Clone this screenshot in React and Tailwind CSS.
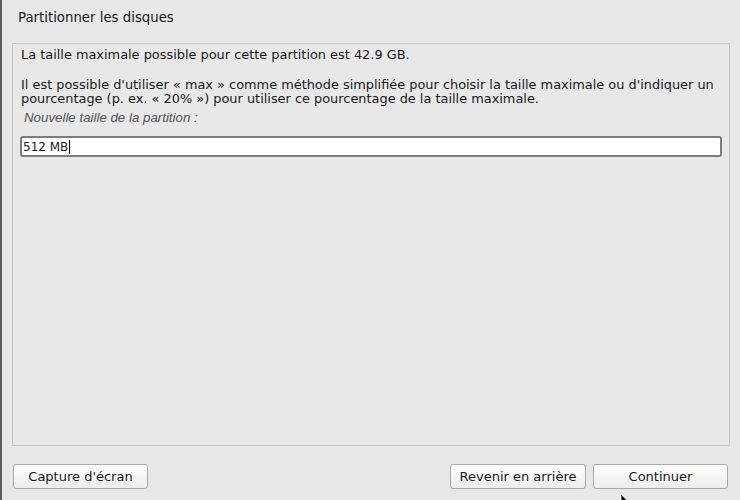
export default function App() {
  const font = { fontFamily: '"DejaVu Sans", sans-serif' };

  return (
    <div
      className="relative flex w-[740px] h-[500px] overflow-hidden bg-[#e8e8e8] border-l-2 border-[#5e5e5e] text-[13px] text-[#1a1a1a]"
      style={font}
    >
      <div className="flex flex-1 flex-col ml-[10px] mr-[10px]">
        {/* Header */}
        <div className="h-[43px] pl-[6px] pt-[11px] leading-[14px] text-[13.3px]">Partitionner les disques</div>

        {/* Main panel */}
        <div className="flex h-[403px] flex-col border border-[#c6c6c6] px-[7px] pt-[4px] text-[12.9px]">
          <p className="pl-px leading-[14px]">La taille maximale possible pour cette partition est 42.9 GB.</p>
          <p className="mt-[16px] pl-px leading-[14px]">
            Il est possible d'utiliser « max » comme méthode simplifiée pour choisir la taille maximale ou d'indiquer un
            pourcentage (p. ex. « 20% ») pour utiliser ce pourcentage de la taille maximale.
          </p>
          <p
            className="mt-[5px] pl-[4px] leading-[14px] italic text-[13.3px] text-[#555]"
            style={{ fontFamily: '"Liberation Sans", sans-serif' }}
          >
            Nouvelle taille de la partition :
          </p>
          <div className="mt-[11px] flex h-[21px] items-center rounded-[3px] border-2 border-[#7c7c7c] bg-white pl-[1px] text-[12px]">
            <span className="leading-[14px]">512 MB</span>
            <span className="ml-px h-[14px] w-px bg-black" />
          </div>
        </div>

        {/* Buttons */}
        <div className="mt-[18px] flex items-center justify-between pl-px pr-[2px]">
          <button className="h-[25px] w-[135px] rounded-[3px] border border-[#a9a9a9] bg-gradient-to-b from-white to-[#ededed] leading-[14px] text-[#1a1a1a]">
            Capture d'écran
          </button>
          <div className="flex gap-[7px]">
            <button className="h-[25px] w-[136px] rounded-[3px] border border-[#a9a9a9] bg-gradient-to-b from-white to-[#ededed] leading-[14px] text-[#1a1a1a]">
              Revenir en arrière
            </button>
            <button className="h-[25px] w-[135px] rounded-[3px] border border-[#a9a9a9] bg-gradient-to-b from-white to-[#ededed] leading-[14px] text-[#1a1a1a]">
              Continuer
            </button>
          </div>
        </div>
      </div>

      {/* Mouse pointer */}
      <svg className="absolute left-[618px] top-[494px]" width="10" height="14" viewBox="0 0 10 14">
        <path d="M1 0 L1 11 L3.5 8.5 L5.5 13 L7 12.3 L5 8 L8.5 8 Z" fill="#000" stroke="#fff" strokeWidth="0.8" />
      </svg>
    </div>
  );
}
